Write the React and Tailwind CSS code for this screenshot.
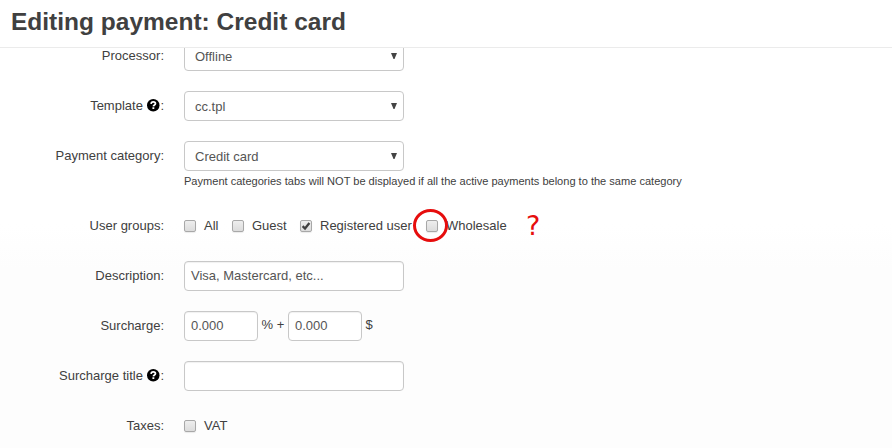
function HelpIcon() {
  return (
    <svg className="-mt-[1.5px] mr-[0.5px] ml-[4.5px] h-[12.5px] w-[12.5px] shrink-0" viewBox="0 0 12 12">
      <circle cx="6" cy="6" r="6" fill="#000" />
      <path d="M3.9 4.7C4 3.2 4.9 2.7 6 2.7S8.1 3.4 8.1 4.5C8.1 5.8 6.2 5.7 6.1 7.1" fill="none" stroke="#fff" strokeWidth="1.7" />
      <rect x="5.2" y="7.9" width="1.8" height="1.7" fill="#fff" />
    </svg>
  );
}

function Row({ label, help, children }) {
  return (
    <div className="flex h-[50px] shrink-0 items-start gap-5">
      <div className="flex w-[164px] items-center justify-end pt-[5px] whitespace-nowrap">
        {help ? <>{label}<HelpIcon />:</> : `${label}:`}
      </div>
      {children}
    </div>
  );
}

function Select({ value }) {
  return (
    <div className="flex h-[30px] w-[220px] items-center justify-between rounded-[4px] border border-[#c8c8c8] bg-white pt-px pr-[6px] pl-[10px] text-[#555]">
      <span>{value}</span>
      <svg className="-mt-[2px] h-[6px] w-[6px]" viewBox="0 0 6 6">
        <path d="M0 0H6L3.5 6H2.5Z" fill="#444" />
      </svg>
    </div>
  );
}

function Input({ value, width = "w-[220px]" }) {
  return (
    <div className={`flex h-[30px] items-center rounded-[4px] border border-[#c8c8c8] bg-white px-[6px] text-[#555] shadow-[inset_0_1px_1px_rgba(0,0,0,0.06)] ${width}`}>
      {value}
    </div>
  );
}

function Check({ label, checked, marked }) {
  return (
    <div className="flex items-center gap-2 pt-[5px]">
      <span className="relative h-3 w-3 shrink-0 rounded-[2px] border border-[#a8a8a8] bg-linear-to-b from-[#eeeeee] to-[#dcdcdc] shadow-[0_1px_1px_rgba(0,0,0,0.08)]">
        {checked && (
          <svg className="absolute top-0 left-0 h-[10px] w-[10px]" viewBox="0 0 10 10">
            <path d="M1.6 5.2L4 7.5L8.4 2.1" fill="none" stroke="#404040" strokeWidth="2.3" />
          </svg>
        )}
        {marked && (
          <svg className="absolute -top-[13px] -left-[14px] z-10 h-[34px] w-[36px] max-w-none" viewBox="0 0 36 34">
            <ellipse cx="17.5" cy="17.5" rx="16" ry="15" fill="none" stroke="#e60d0d" strokeWidth="3" />
          </svg>
        )}
      </span>
      <span>{label}</span>
    </div>
  );
}

export default function App() {
  return (
    <div className="flex h-[448px] w-[892px] flex-col overflow-hidden bg-linear-to-b from-white from-50% to-[#fdfdfd] to-60% font-['Liberation_Sans',Arial,sans-serif] text-[13px] leading-5 text-[#404040]">
      <header className="flex h-12 shrink-0 items-center border-b border-[#ebebeb] bg-white pb-1 pl-[11px]">
        <h1 className="text-[24.5px] leading-8 font-bold">Editing payment: Credit card</h1>
      </header>
      <main className="min-h-0 flex-1 overflow-hidden">
        <form className="-mt-[7px] flex flex-col">
          <Row label="Processor"><Select value="Offline" /></Row>
          <Row label="Template" help><Select value="cc.tpl" /></Row>
          <Row label="Payment category">
            <div>
              <Select value="Credit card" />
              <p className="text-[11.05px] leading-5 whitespace-nowrap">Payment categories tabs will NOT be displayed if all the active payments belong to the same category</p>
            </div>
          </Row>
          <div className="mt-5">
            <Row label="User groups">
              <div className="flex items-start">
                <div className="w-12"><Check label="All" /></div>
                <div className="w-[68px]"><Check label="Guest" /></div>
                <div className="w-[126px] whitespace-nowrap"><Check label="Registered user" checked /></div>
                <div className="w-[100px]"><Check label="Wholesale" marked /></div>
                <span className="font-['DejaVu_Sans',sans-serif] text-[27px] leading-[30px] text-[#e60d0d]">?</span>
              </div>
            </Row>
          </div>
          <Row label="Description"><Input value="Visa, Mastercard, etc..." /></Row>
          <Row label="Surcharge">
            <div className="flex items-center">
              <Input value="0.000" width="w-[74px]" />
              <span className="w-[30px] pb-[2px] pl-[3.5px] whitespace-nowrap">% +</span>
              <Input value="0.000" width="w-[74px]" />
              <span className="pb-[2px] pl-[3.5px]">$</span>
            </div>
          </Row>
          <Row label="Surcharge title" help><Input /></Row>
          <Row label="Taxes"><Check label="VAT" /></Row>
        </form>
      </main>
    </div>
  );
}
